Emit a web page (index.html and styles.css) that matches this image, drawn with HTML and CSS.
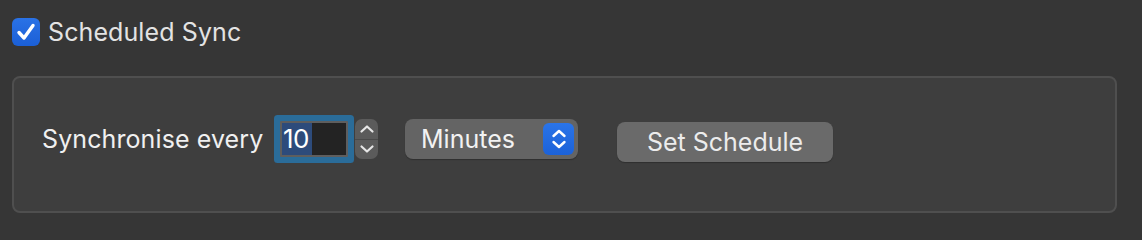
FILE: index.html
```html
<!DOCTYPE html>
<html>
<head>
<meta charset="utf-8">
<link rel="stylesheet" href="styles.css">
</head>
<body>
<div class="page">
  <label class="check-row">
    <span class="checkbox">
      <svg width="24" height="24" viewBox="0 0 24 24"><path d="M5 12.5 L10 18 L19 5.5" fill="none" stroke="#fff" stroke-width="3.4" stroke-linecap="round" stroke-linejoin="round"/></svg>
    </span>
    <span class="check-label">Scheduled Sync</span>
  </label>
  <div class="group">
    <div class="row">
      <span class="label">Synchronise every</span>
      <div class="field"><span class="sel">10</span></div>
      <div class="stepper">
        <div class="step up"><svg width="16" height="12" viewBox="0 0 16 12"><path d="M2.5 8.5 L8 3.5 L13.5 8.5" fill="none" stroke="#e6e6e6" stroke-width="2.2" stroke-linecap="round" stroke-linejoin="round"/></svg></div>
        <div class="step down"><svg width="16" height="12" viewBox="0 0 16 12"><path d="M2.5 3.5 L8 8.5 L13.5 3.5" fill="none" stroke="#e6e6e6" stroke-width="2.2" stroke-linecap="round" stroke-linejoin="round"/></svg></div>
      </div>
      <div class="popup">
        <span class="popup-text">Minutes</span>
        <span class="popup-arrows">
          <svg width="18" height="26" viewBox="0 0 18 26"><path d="M3.5 10 L9 5 L14.5 10 M3.5 16 L9 21 L14.5 16" fill="none" stroke="#fff" stroke-width="2.4" stroke-linecap="round" stroke-linejoin="round"/></svg>
        </span>
      </div>
      <button class="btn">Set Schedule</button>
    </div>
  </div>
</div>
</body>
</html>
```
FILE: styles.css
```css
html, body {
  margin: 0;
  padding: 0;
  background: #363636;
  font-family: Inter, "Noto Sans", sans-serif;
  color: #e8e8e8;
}
.page {
  width: 1142px;
  height: 234px;
  box-sizing: border-box;
  padding: 18px 25px 0 12px;
  overflow: hidden;
}
.check-row {
  display: flex;
  align-items: center;
  gap: 8px;
  height: 28px;
}
.checkbox {
  width: 28px;
  height: 28px;
  border-radius: 6px;
  background: linear-gradient(#2a72e6, #1b5fd6);
  display: flex;
  align-items: center;
  justify-content: center;
  box-sizing: border-box;
}
.check-label {
  font-size: 25px;
  color: #e3e3e3;
  letter-spacing: 0.1px;
}
.group {
  margin-top: 30px;
  height: 137px;
  box-sizing: border-box;
  border: 2px solid #4f4f4f;
  border-radius: 8px;
  background: #3e3e3e;
  padding: 41px 0 0 28px;
}
.row {
  display: flex;
  align-items: center;
  height: 40px;
}
.label {
  font-size: 25px;
  color: #f0f0f0;
  width: 238px;
  letter-spacing: 0.1px;
}
.field {
  width: 68px;
  height: 36px;
  box-sizing: border-box;
  border: 2px solid #5e5e5e;
  background: #232323;
  border-radius: 1px;
  box-shadow: 0 0 0 6px #2a6c99;
  display: flex;
  align-items: stretch;
  padding: 0;
}
.sel {
  background: #2d4b7b;
  color: #ffffff;
  font-size: 26px;
  line-height: 32px;
  padding: 0 1px;
  width: 30px;
  box-sizing: border-box;
  letter-spacing: -0.5px;
}
.stepper {
  margin-left: 7px;
  width: 23px;
  height: 40px;
  border-radius: 7px;
  background: #5b5b5b;
  display: flex;
  flex-direction: column;
  overflow: hidden;
}
.step {
  flex: 1;
  display: flex;
  align-items: center;
  justify-content: center;
}
.step.up {
  border-bottom: 1px solid #4a4a4a;
}
.popup {
  margin-left: 27px;
  width: 173px;
  height: 40px;
  box-sizing: border-box;
  background: #646464;
  border-radius: 8px;
  display: flex;
  align-items: center;
  justify-content: space-between;
  padding: 0 4px 0 16px;
  box-shadow: 0 1px 1px rgba(0,0,0,0.25);
}
.popup-text {
  font-size: 25px;
  color: #f2f2f2;
}
.popup-arrows {
  width: 31px;
  height: 32px;
  border-radius: 6px;
  background: linear-gradient(#2a74e8, #1c62d8);
  display: flex;
  align-items: center;
  justify-content: center;
}
.btn {
  margin-left: 39px;
  margin-top: 6px;
  width: 216px;
  height: 40px;
  border: none;
  border-radius: 8px;
  background: #6a6a6a;
  color: #ececec;
  font-family: Inter, "Noto Sans", sans-serif;
  font-size: 25px;
  padding: 0;
  box-shadow: 0 1px 1px rgba(0,0,0,0.25);
}
```
